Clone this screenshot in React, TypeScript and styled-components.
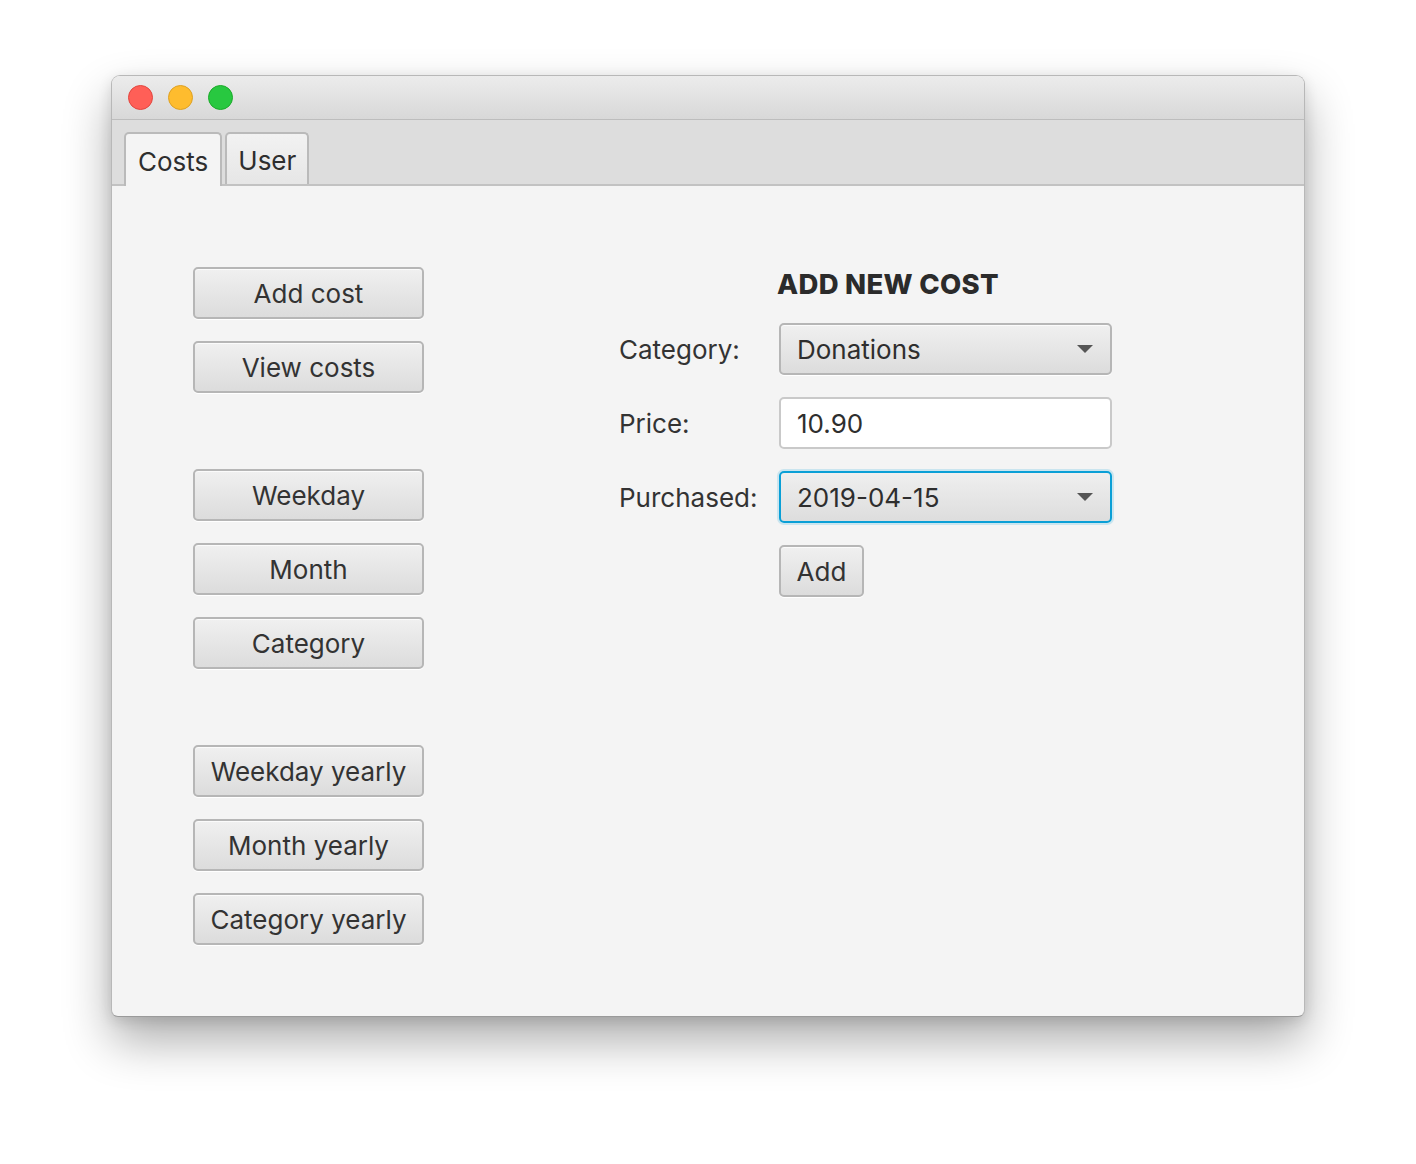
import React from "react";
import styled, { createGlobalStyle, css } from "styled-components";

const Global = createGlobalStyle`
  html, body { margin: 0; padding: 0; background: #ffffff; }
  body { font-family: Inter, "Open Sans", "Liberation Sans", sans-serif; color: #333333; }
  * { box-sizing: border-box; }
`;

const Stage = styled.div`
  width: 1416px;
  height: 1164px;
  padding: 75px 0 0 111px;
  background: #ffffff;
`;

const Window = styled.div`
  width: 1194px;
  height: 942px;
  border-radius: 9px 9px 7px 7px;
  border: 1px solid #b8b8b8;
  border-bottom-color: #9a9a9a;
  background: #f4f4f4;
  overflow: hidden;
  display: flex;
  flex-direction: column;
  box-shadow: 0 24px 48px rgba(0, 0, 0, 0.32), 0 4px 14px rgba(0, 0, 0, 0.12);
`;

const TitleBar = styled.div`
  height: 44px;
  flex: none;
  display: flex;
  align-items: center;
  gap: 15px;
  padding-left: 16px;
  background: linear-gradient(#ececec, #d8d8d8);
  border-bottom: 1px solid #bdbdbd;
`;

const Light = styled.span<{ $fill: string; $edge: string }>`
  width: 25px;
  height: 25px;
  border-radius: 50%;
  background: ${(p) => p.$fill};
  border: 1px solid ${(p) => p.$edge};
`;

const TabBar = styled.div`
  height: 66px;
  flex: none;
  display: flex;
  align-items: flex-end;
  gap: 3px;
  padding-left: 12px;
  background: #dddddd;
  border-bottom: 2px solid #c2c2c2;
`;

const Tab = styled.div<{ $active?: boolean }>`
  height: 52px;
  padding: 2px 12px 0;
  display: flex;
  align-items: center;
  font-size: 26px;
  color: #2e2e2e;
  border: 2px solid #bababa;
  border-bottom: none;
  border-radius: 5px 5px 0 0;
  ${(p) =>
    p.$active
      ? css`
          background: #f4f4f4;
          height: 54px;
          margin-bottom: -2px;
        `
      : css`
          background: linear-gradient(#f2f2f2, #e6e6e6);
          padding: 2px 11px 0;
        `}
`;

const Content = styled.div`
  flex: 1;
  display: flex;
  align-items: flex-start;
  gap: 195px;
  padding: 81px 0 0 81px;
`;

const ButtonColumn = styled.div`
  display: flex;
  flex-direction: column;
  gap: 76px;
  width: 231px;
`;

const ButtonGroup = styled.div`
  display: flex;
  flex-direction: column;
  gap: 22px;
`;

const FxButton = styled.button<{ $width?: number }>`
  height: 52px;
  width: ${(p) => (p.$width ? `${p.$width}px` : "100%")};
  padding: 0;
  font-family: inherit;
  font-size: 26px;
  color: #333333;
  background: linear-gradient(#f0f0f0, #dcdcdc);
  border: 2px solid #b6b6b6;
  border-radius: 5px;
  box-shadow: inset 0 1px 0 #fbfbfb, 0 1px 0 #ffffff;
  display: flex;
  align-items: center;
  justify-content: center;
`;

const Form = styled.div`
  display: grid;
  grid-template-columns: 160px 333px;
  row-gap: 22px;
  align-items: center;
`;

const Heading = styled.div`
  grid-column: 2;
  height: 34px;
  margin-left: -2px;
  font-size: 27.5px;
  font-weight: 800;
  letter-spacing: 0.3px;
  color: #2b2b2b;
  line-height: 34px;
`;

const Label = styled.div`
  font-size: 26px;
  color: #333333;
`;

const Field = styled.div<{ $kind: "combo" | "text" | "focus" }>`
  height: 52px;
  display: flex;
  align-items: center;
  justify-content: space-between;
  padding: 0 16px 0 16px;
  font-size: 26px;
  color: #2e2e2e;
  border-radius: 5px;
  ${(p) =>
    p.$kind === "text"
      ? css`
          background: #ffffff;
          border: 2px solid #c9c9c9;
        `
      : p.$kind === "focus"
      ? css`
          background: linear-gradient(#efefef, #dddddd);
          border: 2px solid #0a9fd6;
          box-shadow: 0 0 0 2px rgba(10, 159, 214, 0.18);
        `
      : css`
          background: linear-gradient(#f0f0f0, #dcdcdc);
          border: 2px solid #b6b6b6;
          box-shadow: inset 0 1px 0 #fbfbfb, 0 1px 0 #ffffff;
        `}
`;

const Arrow = () => (
  <svg width="18" height="10" viewBox="0 0 18 10">
    <path d="M1 1 L17 1 L9 9 Z" fill="#555555" />
  </svg>
);

const Spacer = styled.div``;

export default function App() {
  return (
    <>
      <Global />
      <Stage>
        <Window>
          <TitleBar>
            <Light $fill="#ff5f57" $edge="#e2463f" />
            <Light $fill="#febc2e" $edge="#dea123" />
            <Light $fill="#28c840" $edge="#1aab29" />
          </TitleBar>
          <TabBar>
            <Tab $active>Costs</Tab>
            <Tab>User</Tab>
          </TabBar>
          <Content>
            <ButtonColumn>
              <ButtonGroup>
                <FxButton>Add cost</FxButton>
                <FxButton>View costs</FxButton>
              </ButtonGroup>
              <ButtonGroup>
                <FxButton>Weekday</FxButton>
                <FxButton>Month</FxButton>
                <FxButton>Category</FxButton>
              </ButtonGroup>
              <ButtonGroup>
                <FxButton>Weekday yearly</FxButton>
                <FxButton>Month yearly</FxButton>
                <FxButton>Category yearly</FxButton>
              </ButtonGroup>
            </ButtonColumn>
            <Form>
              <Heading>ADD NEW COST</Heading>
              <Label>Category:</Label>
              <Field $kind="combo">
                <span>Donations</span>
                <Arrow />
              </Field>
              <Label>Price:</Label>
              <Field $kind="text">
                <span>10.90</span>
              </Field>
              <Label>Purchased:</Label>
              <Field $kind="focus">
                <span>2019-04-15</span>
                <Arrow />
              </Field>
              <Spacer />
              <FxButton $width={85}>Add</FxButton>
            </Form>
          </Content>
        </Window>
      </Stage>
    </>
  );
}
